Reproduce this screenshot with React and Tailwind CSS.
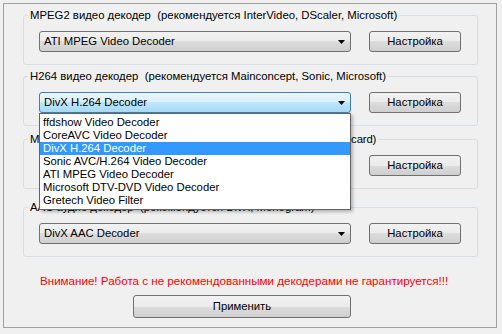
import React from 'react';

const grayFace =
  'border-[#707070] bg-[linear-gradient(to_bottom,#f2f2f2_0%,#ebebeb_50%,#dddddd_50%,#cfcfcf_100%)]';
const blueFace =
  'border-[#3c7fb1] bg-[linear-gradient(to_bottom,#eaf6fd_0%,#d9f0fc_50%,#bee6fd_50%,#a7d9f5_100%)]';

const decoders = [
  'ffdshow Video Decoder',
  'CoreAVC Video Decoder',
  'DivX H.264 Decoder',
  'Sonic AVC/H.264 Video Decoder',
  'ATI MPEG Video Decoder',
  'Microsoft DTV-DVD Video Decoder',
  'Gretech Video Filter',
];

const Arrow = () => (
  <svg width="7" height="4" viewBox="0 0 7 4" className="shrink-0">
    <path d="M0 0h7L3.5 4z" fill="#000" />
  </svg>
);

const Combo = ({ value, active, open }) => (
  <div className="relative">
    <div
      className={`w-[312px] h-[21px] border rounded-[3px] flex items-center justify-between pl-[4px] pr-[5px] ${
        active ? blueFace : grayFace
      }`}
    >
      <span className="text-[11.3px] text-black">{value}</span>
      <Arrow />
    </div>
    {open && (
      <div className="absolute left-0 top-full z-10 w-[312px] bg-white border border-[#646464] py-[2px] shadow-[2px_2px_3px_rgba(0,0,0,0.25)]">
        {decoders.map((d) => (
          <div
            key={d}
            className={`h-[13px] leading-[13px] px-[3px] text-[11.3px] ${
              d === value ? 'bg-[#3399ff] text-white' : 'text-black'
            }`}
          >
            {d}
          </div>
        ))}
      </div>
    )}
  </div>
);

const SetupButton = () => (
  <button className={`w-[92px] h-[21px] border rounded-[3px] text-[11.3px] text-black ${grayFace}`}>
    Настройка
  </button>
);

const Group = ({ title, className = '', titleClass = '', children }) => (
  <div className={`border border-[#d5dfe5] rounded-[3px] h-[50px] ${className}`}>
    <div
      className={`-mt-[8px] ml-[4px] w-fit px-[2px] bg-[#f0f0f0] leading-[14px] whitespace-pre text-[11.35px] text-black ${titleClass}`}
    >
      {title}
    </div>
    <div className="mt-[9px] ml-[15px] flex items-center gap-[18px]">{children}</div>
  </div>
);

export default function App() {
  return (
    <div className="w-[502px] h-[334px] bg-[#f0f0f0] pt-[3px] pl-[3px] font-['Liberation_Sans',Arial,sans-serif]">
      <div className="w-[494px] h-[325px] border border-[#a0a0a0] pl-[19px] pr-[18px]">
        <Group className="mt-[11px]" title="MPEG2 видео декодер  (рекомендуется InterVideo, DScaler, Microsoft)">
          <Combo value="ATI MPEG Video Decoder" />
          <SetupButton />
        </Group>

        <Group className="mt-[11px] relative z-10" title="H264 видео декодер  (рекомендуется Mainconcept, Sonic, Microsoft)">
          <Combo value="DivX H.264 Decoder" active open />
          <SetupButton />
        </Group>

        <Group
          className="mt-[13px]"
          titleClass="tracking-[-0.15px]"
          title="MPEG4 видео декодер (рекомендуется ffdshow, DivX, Xvid, Elecard)"
        >
          <Combo value="" />
          <SetupButton />
        </Group>

        <Group className="mt-[18px]" title="AAC аудио декодер  (рекомендуется DivX, Monogram)">
          <Combo value="DivX AAC Decoder" />
          <SetupButton />
        </Group>

        <p className="mt-[17px] pl-[17px] leading-[14px] text-[11.6px] text-[#ff0000]">
          Внимание! Работа с не рекомендованными декодерами не гарантируется!!!
        </p>

        <button className={`mt-[7px] ml-[110px] w-[218px] h-[23px] border rounded-[3px] text-[11.3px] text-black ${grayFace}`}>
          Применить
        </button>
      </div>
    </div>
  );
}
